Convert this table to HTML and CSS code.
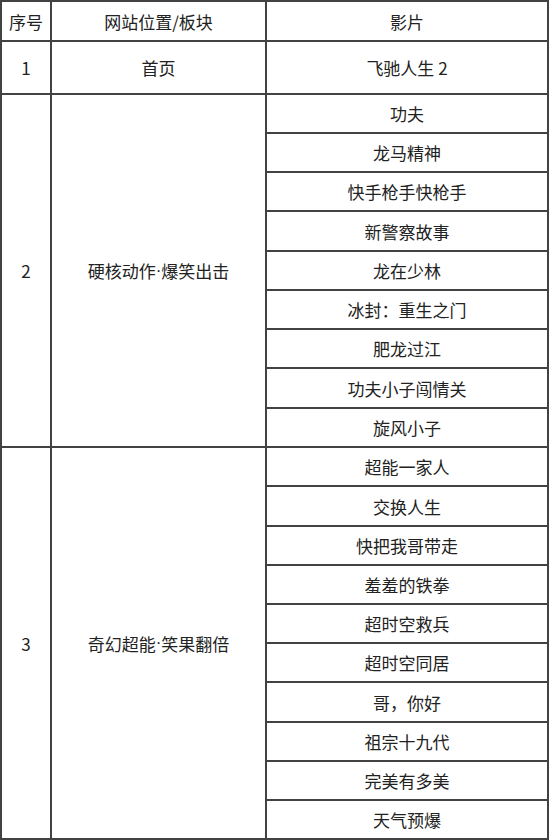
FILE: index.html
```html
<!DOCTYPE html>
<html lang="zh-CN">
<head>
<meta charset="utf-8">
<title>影片列表</title>
<link rel="stylesheet" href="styles.css">
</head>
<body>
<div class="sheet">
  <div class="cell head c1">序号</div>
  <div class="cell head c2">网站位置/板块</div>
  <div class="cell head c3">影片</div>

  <div class="cell c1 r1">1</div>
  <div class="cell c2 r1">首页</div>
  <div class="cell c3">飞驰人生 2</div>

  <div class="cell c1 g2">2</div>
  <div class="cell c2 g2">硬核动作<span class="dot">·</span>爆笑出击</div>
  <div class="cell c3">功夫</div>
  <div class="cell c3">龙马精神</div>
  <div class="cell c3">快手枪手快枪手</div>
  <div class="cell c3">新警察故事</div>
  <div class="cell c3">龙在少林</div>
  <div class="cell c3">冰封：重生之门</div>
  <div class="cell c3">肥龙过江</div>
  <div class="cell c3">功夫小子闯情关</div>
  <div class="cell c3">旋风小子</div>

  <div class="cell c1 g3">3</div>
  <div class="cell c2 g3">奇幻超能<span class="dot">·</span>笑果翻倍</div>
  <div class="cell c3">超能一家人</div>
  <div class="cell c3">交换人生</div>
  <div class="cell c3">快把我哥带走</div>
  <div class="cell c3">羞羞的铁拳</div>
  <div class="cell c3">超时空救兵</div>
  <div class="cell c3">超时空同居</div>
  <div class="cell c3">哥，你好</div>
  <div class="cell c3">祖宗十九代</div>
  <div class="cell c3">完美有多美</div>
  <div class="cell c3">天气预爆</div>
</div>
</body>
</html>
```

FILE: styles.css
```css
html, body {
  margin: 0;
  padding: 0;
  background: #ffffff;
}

.sheet {
  display: grid;
  width: 549px;
  box-sizing: border-box;
  padding: 2px;
  gap: 2px;
  background: #424242;
  grid-template-columns: 48px 213px 280px;
  grid-template-rows:
    38px 51px
    37px 37px 37px 38px 37px 37px 37px 38px 37px
    37px 38px 37px 37px 37px 37px 38px 37px 37px 37px;
  font-family: "Noto Sans CJK SC", "Noto Sans", sans-serif;
  font-size: 17px;
  color: #222222;
}

.cell {
  background: #ffffff;
  display: flex;
  align-items: center;
  justify-content: center;
  white-space: nowrap;
}

.dot {
  font-family: "Liberation Sans", sans-serif;
}

.c1 { grid-column: 1; }
.c2 { grid-column: 2; }
.c3 { grid-column: 3; }

.g2 { grid-row: 3 / span 9; }
.g3 { grid-row: 12 / span 10; }
```
